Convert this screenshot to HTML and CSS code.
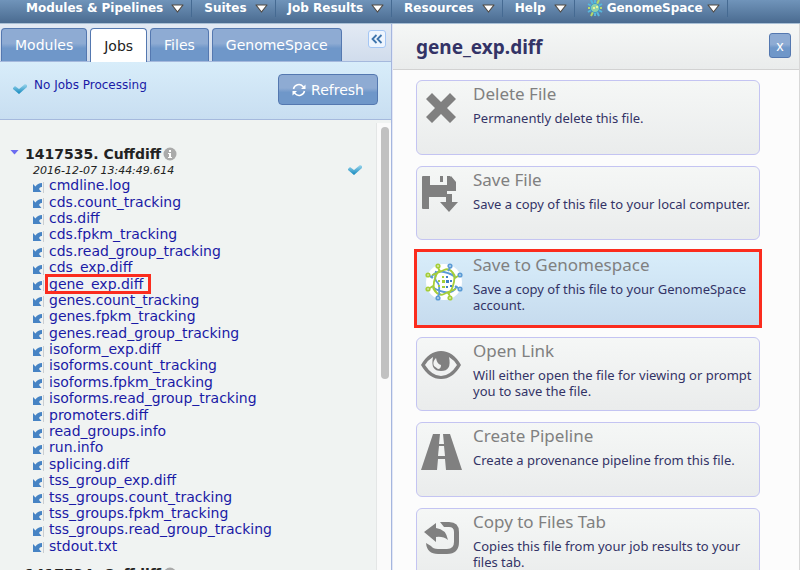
FILE: index.html
```html
<!DOCTYPE html>
<html lang="en">
<head>
<meta charset="utf-8">
<title>GenePattern</title>
<link rel="stylesheet" href="styles.css">
</head>
<body>
<svg class="defs" aria-hidden="true">
  <defs>
    <linearGradient id="tick-fill" x1="0" y1="0" x2="0" y2="1"><stop offset="0" stop-color="#9fd8ee"/><stop offset="1" stop-color="#1187bd"/></linearGradient>
    <symbol id="caret" viewBox="0 0 13 9"><path d="M1 1h11L6.500 8z" fill="#fff" stroke="#514b45" stroke-width="1.200" stroke-linejoin="round"/></symbol>
    <symbol id="tick" viewBox="0 0 16 12"><path d="M1 5l2-2 4 3 6-5 2 1v2l-8 7L1 6z" fill="url(#tick-fill)"/></symbol>
    <symbol id="file-arrow" viewBox="0 0 12 12"><path d="M0 3l2.500 2.500Q4.500 2 9 2v4Q7 5.500 6 8l2.500 3H0z" fill="#4683c4"/><path d="M10.500 1v11" stroke="#c9cdd1"/></symbol>
    <symbol id="info" viewBox="0 0 14 14"><circle cx="7" cy="7" r="6.500" fill="#aaa"/><path d="M6 3h2v2H6zM5 6h3v4h1v1H5v-1h1V7H5z" fill="#fff"/></symbol>
    <symbol id="genome" viewBox="-19 -19 38 38">
      <circle r="18" fill="#fff"/>
      <g fill="none" stroke-width="1.800">
        <path d="M-13-4Q-9-12 0-10T12-4M13 4Q9 12 0 10T-12 4M-8-11Q-10-2-7 0T-5 12" stroke="#5b9bd5"/>
        <path d="M-4 13Q-12 9-10 0T-4-12M4-13Q12-9 10 0T4 12M-12-7Q-6-9 0-12T11-6M12 7Q6 9 0 12T-11 6" stroke="#a6ce39"/>
        <g stroke="#5b9bd5"><path d="M4-11l2-3M-4 11l-2 3M-11-4l-3-2M11 4l3 2"/><circle cx="6" cy="-16" r="1.700"/><circle cx="-6" cy="16" r="1.700"/><circle cx="16" cy="-7" r="1.700"/><circle cx="16" cy="7" r="1.700"/></g>
        <g stroke="#a6ce39"><path d="M-4-11l-2-3M4 11l2 3M-11 4l-3 2M11-4l3-2"/><circle cx="-6" cy="-16" r="1.700"/><circle cx="6" cy="16" r="1.700"/><circle cx="-16" cy="7" r="1.700"/><circle cx="-16" cy="-7" r="1.700"/></g>
      </g>
      <path d="M-6-2h2v2h-2zM-2-2h3v3h-3zM-2-6h2v2h-2zM-6 3h2v2h-2zM-2 4h3v2h-3z" fill="#a6ce39"/>
      <path d="M2-6h2v2H2zM2-2h3v3H2zM6-2h2v2H6zM2 4h2v2H2zM6 3h2v2H6z" fill="#3f7fc4"/>
    </symbol>
  </defs>
</svg>

<nav class="menu">
  <a href="#">Modules &amp; Pipelines <svg class="caret"><use href="#caret"/></svg></a>
  <a href="#">Suites <svg class="caret"><use href="#caret"/></svg></a>
  <a href="#">Job Results <svg class="caret"><use href="#caret"/></svg></a>
  <a href="#">Resources <svg class="caret"><use href="#caret"/></svg></a>
  <a href="#">Help <svg class="caret"><use href="#caret"/></svg></a>
  <a href="#" class="menu-genome"><svg class="flower" viewBox="0 0 16 18"><path d="M8 1v16M1 5l14 8M1 13l14-8M4 1l8 16" stroke="#58b7dc" stroke-width="2"/><path d="M12 1L4 17M1 9h14" stroke="#b5d96a" stroke-width="2"/><circle cx="8" cy="9" r="4.500" fill="#8fd0a8" stroke="#3e9acb"/><path d="M6 8h2v2H6zM9 7h2v2H9z" fill="#e6f59a"/></svg>GenomeSpace <svg class="caret"><use href="#caret"/></svg></a>
</nav>

<div class="workspace">
  <aside class="side">
    <div class="tabs">
      <button class="tab" type="button">Modules</button>
      <button class="tab active" type="button">Jobs</button>
      <button class="tab" type="button">Files</button>
      <button class="tab" type="button">GenomeSpace</button>
      <button class="collapse" type="button" aria-label="Collapse panel"><svg viewBox="0 0 12 10"><path d="M5.500 1l-4 4 4 4M10.500 1l-4 4 4 4" fill="none" stroke="#3f75ad" stroke-width="1.800"/></svg></button>
    </div>
    <div class="status">
      <svg class="tick"><use href="#tick"/></svg>
      <a href="#">No Jobs Processing</a>
      <button class="refresh" type="button"><svg viewBox="0 0 14 14"><path d="M1.500 6A5.500 5.500 0 0 1 11 3.500l1.500 1.500M12.500 8A5.500 5.500 0 0 1 3 10.500L1.500 9" fill="none" stroke="#fff" stroke-width="1.500"/><path d="M13.500 1.500v4.500H9zM.500 12.500V8H5z" fill="#fff"/></svg>Refresh</button>
    </div>
    <div class="jobs">
      <div class="job-list">
        <section class="job">
          <h2><span class="toggle"></span>1417535. Cuffdiff <svg class="info"><use href="#info"/></svg></h2>
          <div class="when"><time>2016-12-07 13:44:49.614</time><svg class="tick"><use href="#tick"/></svg></div>
          <ul class="files">
            <li><svg><use href="#file-arrow"/></svg><a href="#">cmdline.log</a></li>
            <li><svg><use href="#file-arrow"/></svg><a href="#">cds.count_tracking</a></li>
            <li><svg><use href="#file-arrow"/></svg><a href="#">cds.diff</a></li>
            <li><svg><use href="#file-arrow"/></svg><a href="#">cds.fpkm_tracking</a></li>
            <li><svg><use href="#file-arrow"/></svg><a href="#">cds.read_group_tracking</a></li>
            <li><svg><use href="#file-arrow"/></svg><a href="#">cds_exp.diff</a></li>
            <li><svg><use href="#file-arrow"/></svg><a href="#" class="marked">gene_exp.diff</a></li>
            <li><svg><use href="#file-arrow"/></svg><a href="#">genes.count_tracking</a></li>
            <li><svg><use href="#file-arrow"/></svg><a href="#">genes.fpkm_tracking</a></li>
            <li><svg><use href="#file-arrow"/></svg><a href="#">genes.read_group_tracking</a></li>
            <li><svg><use href="#file-arrow"/></svg><a href="#">isoform_exp.diff</a></li>
            <li><svg><use href="#file-arrow"/></svg><a href="#">isoforms.count_tracking</a></li>
            <li><svg><use href="#file-arrow"/></svg><a href="#">isoforms.fpkm_tracking</a></li>
            <li><svg><use href="#file-arrow"/></svg><a href="#">isoforms.read_group_tracking</a></li>
            <li><svg><use href="#file-arrow"/></svg><a href="#">promoters.diff</a></li>
            <li><svg><use href="#file-arrow"/></svg><a href="#">read_groups.info</a></li>
            <li><svg><use href="#file-arrow"/></svg><a href="#">run.info</a></li>
            <li><svg><use href="#file-arrow"/></svg><a href="#">splicing.diff</a></li>
            <li><svg><use href="#file-arrow"/></svg><a href="#">tss_group_exp.diff</a></li>
            <li><svg><use href="#file-arrow"/></svg><a href="#">tss_groups.count_tracking</a></li>
            <li><svg><use href="#file-arrow"/></svg><a href="#">tss_groups.fpkm_tracking</a></li>
            <li><svg><use href="#file-arrow"/></svg><a href="#">tss_groups.read_group_tracking</a></li>
            <li><svg><use href="#file-arrow"/></svg><a href="#">stdout.txt</a></li>
          </ul>
        </section>
        <section class="job">
          <h2><span class="toggle"></span>1417534. Cuffdiff <svg class="info"><use href="#info"/></svg></h2>
        </section>
      </div>
      <div class="track"><div class="thumb"></div></div>
    </div>
  </aside>

  <main class="detail">
    <header class="detail-head">
      <h1>gene_exp.diff</h1>
      <button class="close" type="button" aria-label="Close">x</button>
    </header>
    <div class="cards">
      <a href="#" class="card">
        <svg viewBox="0 0 44 44"><path d="M5 15l6-6 9 9 9-9 6 6-9 9 9 9-6 6-9-9-9 9-6-6 9-9z"/></svg>
        <div><h3>Delete File</h3><p>Permanently delete this file.</p></div>
      </a>
      <a href="#" class="card">
        <svg viewBox="0 0 44 44"><path d="M2 6h7v9h17l4-9 5 6v9h-9v6H8v12H2q-1 0-1-1V7q0-1 1-1z"/><path d="M19 6h3v6h-3zM26 6h3l6 7v7H25v-5h1zM25 24h6v8h6l-9 10-9-10h6z"/></svg>
        <div><h3>Save File</h3><p>Save a copy of this file to your local computer.</p></div>
      </a>
      <a href="#" class="card chosen">
        <svg viewBox="0 0 44 44"><use href="#genome" x="4" y="8" width="38" height="38"/></svg>
        <div><h3>Save to Genomespace</h3><p>Save a copy of this file to your GenomeSpace account.</p></div>
      </a>
      <a href="#" class="card">
        <svg viewBox="0 0 44 44"><path d="M0 24Q8 10 20 10T40 24Q32 38 20 38T0 24zM4 24Q11 35 20 35T36 24Q33 19 28 16q3 14-8 14T12 16Q7 19 4 24z" fill-rule="evenodd"/><path d="M15 17q-4 4-2 8l4 3q3 0 3-4-4-1-5-7z" fill="#f1f3f2"/></svg>
        <div><h3>Open Link</h3><p>Will either open the file for viewing or prompt you to save the file.</p></div>
      </a>
      <a href="#" class="card">
        <svg viewBox="0 0 44 44"><path d="M12 8h7l-1 10h5L22 8h7l12 36H25l-1-11h-7l-1 11H0z"/><path d="M18 20h5l1 10h-7z" fill="#f1f3f2"/></svg>
        <div><h3>Create Pipeline</h3><p>Create a provenance pipeline from this file.</p></div>
      </a>
      <a href="#" class="card">
        <svg viewBox="0 0 44 44"><path d="M19 10h9q10 0 10 10v10q0 12-12 12H17Q6 42 5 31l5 3q2 3 7 3h9q7 0 7-7V20q0-5-5-5h-5z"/><path d="M3 20l12-9v5q10 1 12 12-5-4-12-3v5z"/></svg>
        <div><h3>Copy to Files Tab</h3><p>Copies this file from your job results to your files tab.</p></div>
      </a>
    </div>
  </main>
</div>
</body>
</html>
```
FILE: styles.css
```css
* { box-sizing: border-box; }
body {
  margin: 0;
  height: 100vh;
  overflow: hidden;
  display: flex;
  flex-direction: column;
  font-family: Verdana, "DejaVu Sans", sans-serif;
  font-size: 14px;
  background: #fcfcfc;
}
h1, h2, h3, p, ul { margin: 0; padding: 0; }
a { text-decoration: none; color: #1a1aa6; }
button { font: inherit; cursor: pointer; }
svg { flex: none; }
.defs { position: absolute; width: 0; height: 0; }

.menu {
  flex: none;
  display: flex;
  height: 24px;
  padding-left: 14px;
  background: linear-gradient(#7094ba, #4a6b90);
  border-bottom: 1px solid #a9c0d6;
}
.menu a {
  display: flex;
  align-items: center;
  gap: 8px;
  height: 17px;
  padding: 0 7px 1px 12px;
  border-right: 1px solid #456a92;
  color: #fff;
  font-size: 12px;
  font-weight: bold;
  white-space: nowrap;
}
.menu .menu-genome { gap: 4px; }
.caret { width: 13px; height: 9px; }
.flower { width: 16px; height: 18px; }

.workspace { flex: 1; min-height: 0; display: grid; grid-template-columns: 49% 1fr; }

.side {
  display: flex;
  flex-direction: column;
  min-height: 0;
  background: #f0f3f2;
  border-right: 1px solid #a5b6de;
}
.tabs {
  flex: none;
  display: flex;
  align-items: flex-end;
  gap: 3px;
  height: 38px;
  padding: 0 5px 0 1px;
  background: linear-gradient(#e3eaf4, #d0dcec);
  border-bottom: 1px solid #a5b9dd;
}
.tab {
  height: 33px;
  padding: 0 13px;
  border: 1px solid #5478b0;
  border-bottom: 0;
  border-radius: 4px 4px 0 0;
  background: linear-gradient(#8eabd3 45%, #6f97c9 60%);
  color: #fff;
}
.tab.active { background: #fff; color: #222; height: 34px; margin-bottom: -1px; }
.collapse {
  display: grid;
  place-items: center;
  width: 18px;
  height: 18px;
  margin: 0 0 13px auto;
  padding: 0;
  border: 1px solid #a4c6f4;
  border-radius: 3px;
  background: #eef5fe;
}
.collapse svg { width: 12px; height: 10px; }
.status {
  flex: none;
  display: flex;
  align-items: flex-start;
  gap: 6px;
  height: 58px;
  padding: 12px 13px 0 12px;
  background: linear-gradient(#d8edfa, #c8def1);
  border-bottom: 1px solid #a5b9dd;
  font-size: 12px;
  line-height: 22px;
}
.tick { width: 16px; height: 12px; }
.status .tick { margin-top: 9px; }
.refresh {
  display: flex;
  align-items: center;
  justify-content: center;
  gap: 5px;
  width: 100px;
  height: 31px;
  margin-left: auto;
  padding: 0;
  border: 1px solid #5478b0;
  border-radius: 4px;
  background: linear-gradient(#8eabd3 45%, #6f97c9 60%);
  color: #fff;
  font-size: 14px;
}
.refresh svg { width: 14px; height: 14px; }

.jobs { flex: 1; min-height: 0; display: flex; padding-top: 3px; }
.job-list { flex: 1; overflow: hidden; padding: 22px 13px 0 10px; }
.job { padding-bottom: 11px; }
.job h2 { display: flex; align-items: center; height: 18px; font-size: 14px; color: #222; }
.toggle { width: 9px; height: 5px; margin: 0 6px 4px 0; background: #6c6cf0; clip-path: polygon(0 0, 100% 0, 50% 100%); }
.info { width: 14px; height: 14px; margin-left: 2px; }
.when {
  display: flex;
  align-items: center;
  justify-content: space-between;
  height: 14px;
  padding-left: 23px;
  font-size: 11px;
  font-style: italic;
  color: #222;
}
.files { display: grid; grid-auto-rows: 1fr; height: 377px; padding-left: 23px; list-style: none; }
.files li { display: flex; align-items: center; gap: 4px; min-height: 0; }
.files svg { width: 12px; height: 12px; margin-top: 3px; }
.files a { line-height: 16px; }
.marked { position: relative; }
.marked::after { content: ""; position: absolute; inset: -2px -8px -2px -4px; border: 3px solid #fb2c1e; }
.track { width: 15px; padding: 4px 3px 0 4px; background: #fafafa; border-left: 1px solid #e4e6e6; }
.thumb { width: 8px; height: 252px; border-radius: 4px; background: #c1c1c1; }

.detail {
  min-width: 0;
  overflow: hidden;
  border-left: 1px solid #e3e7f5;
  border-right: 1px solid #d8d8d8;
  font-family: "Lucida Grande", "Noto Sans", sans-serif;
}
.detail-head {
  display: flex;
  align-items: center;
  justify-content: space-between;
  height: 46px;
  padding: 0 8px 0 23px;
  background: linear-gradient(#f5f7f6, #eaecec);
  border-bottom: 1px solid #d2d2d2;
}
.detail-head h1 { font-size: 19px; color: #333366; }
.close {
  width: 22px;
  height: 25px;
  margin-bottom: 2px;
  padding: 0;
  border: 1px solid #5478b0;
  border-radius: 3px;
  background: linear-gradient(#8eabd3 45%, #6f97c9 60%);
  color: #fff;
}
.cards { display: grid; grid-auto-rows: 1fr; gap: 11px; height: 502px; margin: 10px 39px 0 23px; }
.card {
  display: flex;
  gap: 8px;
  padding: 1px 3px 0 4px;
  border: 1px solid #c4c4f2;
  border-radius: 6px;
  background: linear-gradient(#f5f7f6, #eaecec);
  color: #333366;
}
.card svg { width: 44px; height: 44px; margin-top: 2px; overflow: visible; fill: #808080; }
.card h3 { font-size: 17px; font-weight: normal; line-height: 24px; color: #808080; }
.card p { margin-top: 4px; font-size: 13px; line-height: 16px; }
.card.chosen {
  border-radius: 0;
  background: linear-gradient(#d8edfa, #c6dbee);
  outline: 3px solid #fb2c1e;
  outline-offset: -1px;
}
```
